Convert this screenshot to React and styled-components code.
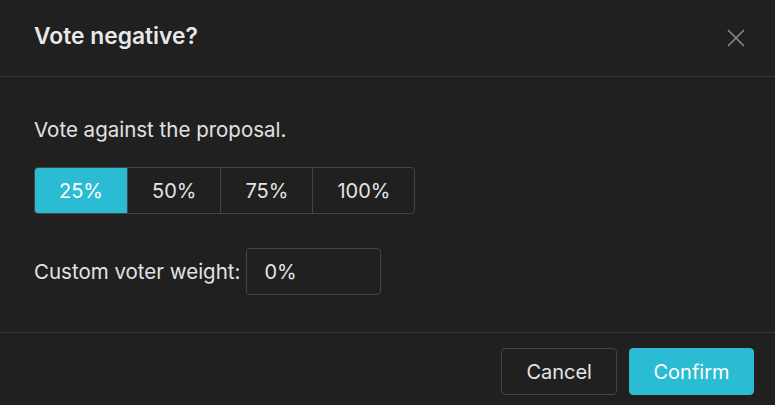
import React, { useState } from "react";
import styled, { createGlobalStyle } from "styled-components";

const Global = createGlobalStyle`
  html, body { margin: 0; padding: 0; background: #202020; }
  body { font-family: Inter, "Noto Sans", sans-serif; color: #e2e2e2; }
  * { box-sizing: border-box; }
`;

const Dialog = styled.div`
  width: 775px;
  height: 405px;
  background: #202020;
  display: flex;
  flex-direction: column;
  overflow: hidden;
`;

const Header = styled.div`
  height: 77px;
  flex: none;
  display: flex;
  align-items: center;
  justify-content: space-between;
  padding: 0 29px 0 34px;
  border-bottom: 1px solid #363636;
`;

const Title = styled.h2`
  margin: 0;
  font-size: 22.8px;
  font-weight: 600;
  color: #e8e8e8;
  line-height: 1;
  padding-bottom: 4px;
`;

const Close = styled.button`
  background: none;
  border: 0;
  padding: 0;
  width: 20px;
  height: 20px;
  display: flex;
  align-items: center;
  justify-content: center;
  cursor: pointer;
`;

const Body = styled.div`
  flex: 1;
  padding: 40px 34px 0;
  display: flex;
  flex-direction: column;
  align-items: flex-start;
`;

const Desc = styled.p`
  margin: 0 0 24px;
  font-size: 20.5px;
  line-height: 26px;
  color: #e2e2e2;
`;

const Segments = styled.div`
  display: flex;
  border: 1px solid #444;
  border-radius: 4px;
  overflow: hidden;
  height: 47px;
`;

const Segment = styled.button`
  font-family: inherit;
  font-size: 20px;
  border: 0;
  border-left: ${(p) => (p.$first ? "0" : "1px solid #444")};
  background: ${(p) => (p.$active ? "#2abcd3" : "transparent")};
  color: ${(p) => (p.$active ? "#ffffff" : "#e4e4e4")};
  padding: 0 24px;
  min-width: 92px;
  cursor: pointer;
`;

const WeightRow = styled.div`
  margin-top: 34px;
  display: flex;
  align-items: center;
  gap: 6px;
`;

const Label = styled.label`
  font-size: 20.5px;
  color: #e2e2e2;
`;

const Input = styled.input`
  width: 135px;
  height: 47px;
  background: transparent;
  border: 1px solid #444;
  border-radius: 4px;
  color: #e4e4e4;
  font-family: inherit;
  font-size: 20px;
  padding: 0 17px;
  outline: none;
`;

const Footer = styled.div`
  flex: none;
  height: 73px;
  border-top: 1px solid #363636;
  display: flex;
  justify-content: flex-end;
  align-items: flex-start;
  gap: 12px;
  padding: 15px 21px 0 0;
`;

const Button = styled.button`
  height: 47px;
  font-family: inherit;
  font-size: 20px;
  border-radius: 4px;
  padding: 0 ${(p) => (p.$primary ? "23.5px" : "24px")};
  cursor: pointer;
  border: 1px solid ${(p) => (p.$primary ? "#2abcd3" : "#444")};
  background: ${(p) => (p.$primary ? "#2abcd3" : "transparent")};
  color: ${(p) => (p.$primary ? "#ffffff" : "#e4e4e4")};
`;

const options = ["25%", "50%", "75%", "100%"];

export default function App() {
  const [active, setActive] = useState(0);
  return (
    <>
      <Global />
      <Dialog>
        <Header>
          <Title>Vote negative?</Title>
          <Close aria-label="Close">
            <svg width="18" height="18" viewBox="0 0 18 18">
              <path d="M1 1 L17 17 M17 1 L1 17" stroke="#8a8a8a" strokeWidth="1.6" fill="none" />
            </svg>
          </Close>
        </Header>
        <Body>
          <Desc>Vote against the proposal.</Desc>
          <Segments>
            {options.map((o, i) => (
              <Segment key={o} $first={i === 0} $active={i === active} onClick={() => setActive(i)}>
                {o}
              </Segment>
            ))}
          </Segments>
          <WeightRow>
            <Label>Custom voter weight:</Label>
            <Input defaultValue="0%" />
          </WeightRow>
        </Body>
        <Footer>
          <Button>Cancel</Button>
          <Button $primary>Confirm</Button>
        </Footer>
      </Dialog>
    </>
  );
}
